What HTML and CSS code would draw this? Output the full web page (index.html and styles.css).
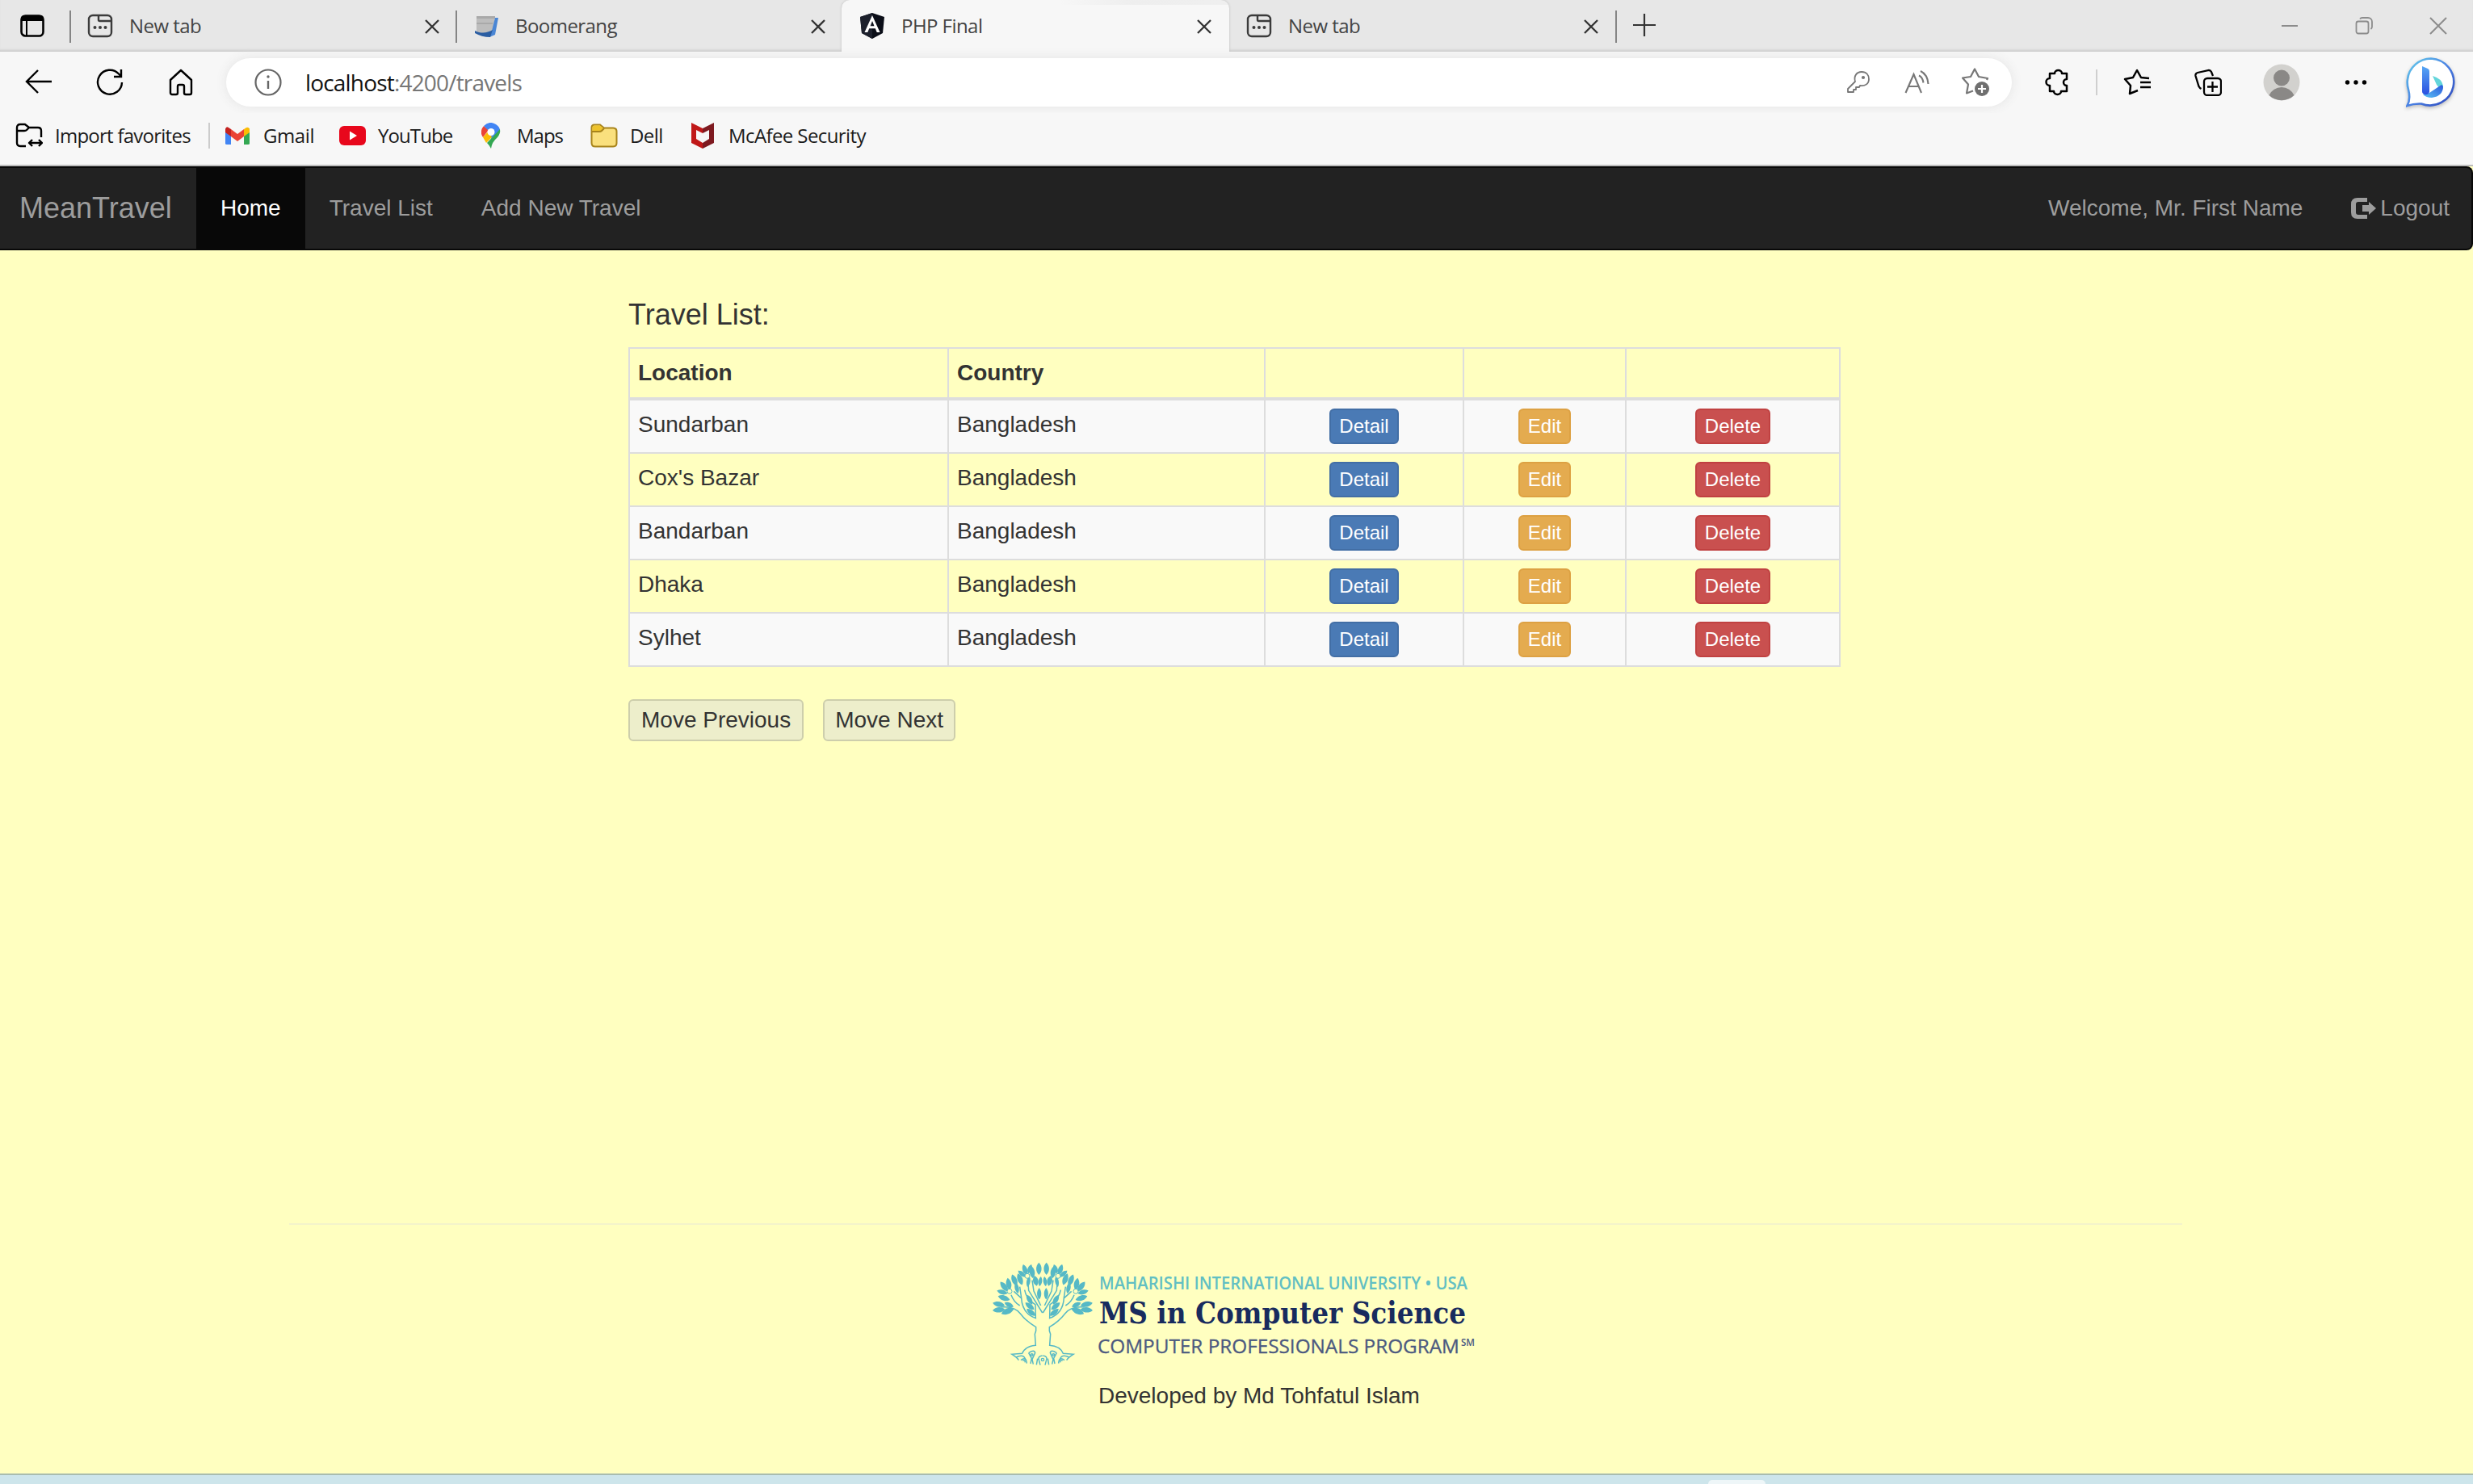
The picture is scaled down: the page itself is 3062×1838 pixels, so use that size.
FILE: index.html
```html
<!DOCTYPE html>
<html lang="en">
<head>
<meta charset="utf-8">
<title>PHP Final</title>
<link rel="stylesheet" href="styles.css">
</head>
<body>
<svg class="defs" width="0" height="0">
  <defs>
    <symbol id="page" viewBox="0 0 32 32"><g fill="none" stroke="#3b3b3b" stroke-width="2.4"><rect x="2" y="3" width="28" height="26" rx="5"/><path d="M14 3v5.500a1.500 1.500 0 0 0 1.500 1.500H30"/></g><g fill="#3b3b3b"><circle cx="9.500" cy="18" r="2"/><circle cx="16" cy="18" r="2"/><circle cx="22.500" cy="18" r="2"/></g></symbol>
    <symbol id="close" viewBox="0 0 20 18"><path d="M2 1l16 16M18 1L2 17" fill="none" stroke="#333" stroke-width="2.3"/></symbol>
    <linearGradient id="bubble" x1="0" y1="0" x2="1" y2="1"><stop offset="0" stop-color="#63cdeb"/><stop offset=".5" stop-color="#4b83e4"/><stop offset="1" stop-color="#2c45bb"/></linearGradient>
    <linearGradient id="stem" x1="0" y1="0" x2="0" y2="1"><stop offset="0" stop-color="#57a7f4"/><stop offset="1" stop-color="#2b50e0"/></linearGradient>
    <linearGradient id="foot" x1="0" y1="1" x2="1" y2="0"><stop offset="0" stop-color="#5bc4f4"/><stop offset="1" stop-color="#2b55dc"/></linearGradient>
  </defs>
</svg>

<header class="tabs">
  <div class="tab-actions"><svg width="32" height="30" viewBox="0 0 32 30"><rect x="2.500" y="2.500" width="27" height="25" rx="5" fill="none" stroke="#000" stroke-width="2.6"/><path d="M2 8V6a4 4 0 0 1 4-4h20a4 4 0 0 1 4 4v3H2z"/><path d="M9 8v19" stroke="#000" stroke-width="2"/></svg></div>
  <div class="tab divided"><svg class="favicon" width="32" height="32"><use href="#page"/></svg><span>New tab</span><svg class="x" width="20" height="18"><use href="#close"/></svg></div>
  <div class="tab divided"><svg class="favicon" width="32" height="32" viewBox="0 0 32 32"><path d="M4 4h23l-3 22H4z" fill="#bdbdbd"/><path d="M4 4h23v3H4zM4 12h20v2H4z" fill="#a9a9a9"/><path d="M27 6h4l-4 21-7 3 3-8z" fill="#4a86d4"/><path d="M2 22c8 4 15 3 22-1l-3 9c-7 0-14-2-19-5z" fill="#2a5da2"/></svg><span>Boomerang</span><svg class="x" width="20" height="18"><use href="#close"/></svg></div>
  <div class="tab active"><svg class="favicon" width="32" height="32" viewBox="0 0 32 32"><path d="M16 0l15 5-2 20-13 7L3 25 1 5z" fill="#0b0e18"/><path d="M16 0v32L3 25 1 5z" fill="#1c202c"/><path d="M16 3l9.500 21h-3.800l-1.900-4.800h-7.600L10.300 24H6.500zM16 10l-2.500 6.200h5z" fill="#fff"/></svg><span>PHP Final</span><svg class="x" width="20" height="18"><use href="#close"/></svg></div>
  <div class="tab last"><svg class="favicon" width="32" height="32"><use href="#page"/></svg><span>New tab</span><svg class="x" width="20" height="18"><use href="#close"/></svg></div>
  <div class="new-tab"><svg width="28" height="28" viewBox="0 0 28 28"><path d="M14 0v28M0 14h28" stroke="#333" stroke-width="2.2"/></svg></div>
  <div class="window">
    <svg width="22" height="22" viewBox="0 0 22 22"><path d="M1 11h20" stroke="#8c8c8c" stroke-width="2"/></svg>
    <svg width="22" height="22" viewBox="0 0 22 22" fill="none" stroke="#8c8c8c" stroke-width="1.800"><rect x="1.500" y="5.500" width="15" height="15" rx="2.500"/><path d="M6 2.500q1-1.500 3-1.500h7a5 5 0 0 1 5 5v6q0 2-1.500 3"/></svg>
    <svg width="22" height="22" viewBox="0 0 22 22"><path d="M1 1l20 20M21 1L1 21" stroke="#8c8c8c" stroke-width="2"/></svg>
  </div>
</header>

<div class="toolbar">
  <div class="tool"><svg width="34" height="32" viewBox="0 0 34 32" fill="none" stroke="#000" stroke-width="2.400"><path d="M33 15H2M16 1L2 15l14 14"/></svg></div>
  <div class="tool"><svg width="34" height="34" viewBox="0 0 34 34" fill="none" stroke="#000" stroke-width="2.400"><path d="M32 17a15 15 0 1 1-4-10.500l3 3M31 1v9h-9"/></svg></div>
  <div class="tool"><svg width="32" height="34" viewBox="0 0 32 34" fill="none" stroke="#000" stroke-width="2.400" stroke-linejoin="round"><path d="M3 14L16 2l13 12v16a2 2 0 0 1-2 2h-5a2 2 0 0 1-2-2v-8a2 2 0 0 0-2-2h-4a2 2 0 0 0-2 2v8a2 2 0 0 1-2 2H5a2 2 0 0 1-2-2z"/></svg></div>
  <div class="address">
    <svg width="34" height="34" viewBox="0 0 34 34"><circle cx="17" cy="17" r="15.500" fill="none" stroke="#666" stroke-width="2.200"/><path d="M17 15v10" stroke="#666" stroke-width="2.400"/><circle cx="17" cy="10" r="1.700" fill="#666"/></svg>
    <span class="url"><b>localhost</b>:4200/travels</span>
    <svg class="key" width="28" height="28" viewBox="0 0 28 28" fill="none" stroke="#777" stroke-width="1.800" stroke-linejoin="round"><path d="M10 13C8 6 12 1 18 1s9 4 9 9c0 6-5 9-11 8l-1 2h-4v3H8v3H1v-4z"/><circle cx="20" cy="8" r="1.200" fill="#777"/></svg>
    <svg class="read" width="32" height="30" viewBox="0 0 32 30" fill="none" stroke="#777" stroke-width="2.100"><path d="M1.500 28L11.500 5l9.500 23M5 20h13M18 6.500c4 2 5 5 5.500 9M20 1c6 3 9 8 9.500 16"/></svg>
    <svg class="star" width="36" height="36" viewBox="0 0 36 36" fill="none" stroke="#777" stroke-width="2.200" stroke-linejoin="round"><path d="M32 15l1-2-11-2-5-9.500L12 11 2 12.500l7 8-2 11 8-3"/><circle cx="26" cy="26" r="9" fill="#6f6f6f" stroke="none"/><path d="M26 21v10M21 26h10" stroke="#fff"/></svg>
  </div>
  <div class="tool ext"><svg width="34" height="34" viewBox="0 0 34 34" fill="none" stroke="#000" stroke-width="2.500" stroke-linejoin="round"><path d="M8 6h5a4.500 4 0 0 1 9 0h6v7a4 4 0 1 0 0 8v7h-7a4.500 4 0 0 1-9 0H7v-7a4.500 4.500 0 0 1 0-9V6z"/></svg></div>
  <div class="rule"></div>
  <div class="tool favorites"><svg width="34" height="34" viewBox="0 0 34 34" fill="none" stroke="#000" stroke-width="2.500" stroke-linejoin="round"><path d="M32 12l-10-1-5-9-5 9-10 2 7 8-1 10 10-4M21 17h13M21 23h13"/></svg></div>
  <div class="tool collections"><svg width="34" height="34" viewBox="0 0 34 34" fill="none" stroke="#000" stroke-width="2.300"><rect x="12" y="12" width="21" height="21" rx="4"/><path d="M22.500 16v13M16 22.500h13M23 9l-2-5q-1-2-3-2L4 5Q1 6 1.500 9l4 13q1 2 3 3"/></svg></div>
  <div class="tool profile"><svg width="46" height="46" viewBox="0 0 46 46"><circle cx="23" cy="23" r="22.500" fill="#d2d1ce"/><circle cx="23" cy="17.500" r="10" fill="#8a8886"/><path d="M7.500 39a17 17 0 0 1 31 0 22.500 22.500 0 0 1-31 0z" fill="#8a8886"/></svg></div>
  <div class="tool more"><svg width="28" height="6" viewBox="0 0 28 6"><circle cx="3.500" cy="3" r="2.700"/><circle cx="14" cy="3" r="2.700"/><circle cx="24.500" cy="3" r="2.700"/></svg></div>
  <div class="tool chat"><svg class="bing" width="62" height="62" viewBox="0 0 62 62"><path d="M31 1.500a29.500 29 0 1 1-12 56Q10 57 1.500 60 6 52 3 40 1 33 2 27A29.500 29 0 0 1 31 1.500z" fill="#fff" stroke="url(#bubble)" stroke-width="2.600"/><path d="M33 23q11 3 13 12 0 4-2 7l-6-8z" fill="#62d5da"/><path d="M21 46q4 4 11 4 14-2 14-14l-2-2L29 44z" fill="url(#foot)"/><path d="M20 11l7 3q2 1 2 3v26q-2 4-6 3-3-1-3-4z" fill="url(#stem)"/></svg></div>
</div>

<nav class="bookmarks">
  <a class="bm import"><svg width="34" height="32" viewBox="0 0 34 32" fill="none" stroke="#000" stroke-width="2.400" stroke-linejoin="round"><path d="M13 29H6q-4 0-4-4V6q0-4 4-4h6l5 4h11q4 0 4 4v8M2 10h9q2 0 3-1l3-3M21 21l-4 4 4 4M29 21l4 4-4 4M17 25h16"/></svg><span>Import favorites</span></a>
  <a class="bm gmail"><svg width="30" height="24" viewBox="0 0 30 24"><path d="M0 3v19q0 1 2 1h5V9z" fill="#4285f4"/><path d="M23 9v14h5q2 0 2-1V3z" fill="#34a853"/><path d="M23 4l3-2q3-1 4 2v4l-7 5z" fill="#fbbc04"/><path d="M7 4v9l8 6 8-6V4l-8 6z" fill="#ea4335"/><path d="M0 4q1-4 4-2l3 2v9L0 8z" fill="#c5221f"/></svg><span>Gmail</span></a>
  <a class="bm youtube"><svg width="33" height="24" viewBox="0 0 33 24"><rect width="33" height="24" rx="6" fill="#e8071c"/><path d="M13 6.500l9 5.500-9 5.500z" fill="#fff"/></svg><span>YouTube</span></a>
  <a class="bm maps"><svg width="24" height="32" viewBox="0 0 24 32"><path d="M3 4l6 5-7 9Q-3 11 3 4z" fill="#ea4335"/><path d="M3 4Q10-3 18 2q5 3 5 8L12 20l-2-9z" fill="#4285f4"/><path d="M2 18l7-8 4 8-7 7z" fill="#fbbc04"/><path d="M12 32Q13 24 20 18q4-5 3-10L7 25q3 3 5 7z" fill="#34a853"/><circle cx="12" cy="11.500" r="4.500" fill="#fff"/></svg><span>Maps</span></a>
  <a class="bm dell"><svg width="34" height="30" viewBox="0 0 34 30"><path d="M5 1.500h7l5 4h11q4.500 0 4.500 4.500v14q0 4.500-4.500 4.500H6q-4.500 0-4.500-4.500V5q0-3.500 3.500-3.500z" fill="#fae07d" stroke="#a8841b" stroke-width="2"/><path d="M2.500 9V5q0-2.500 2.500-2.500h7L16 6l-3 3.500z" fill="#eec32c"/><path d="M2 10h9q2 0 3-1l3-3" fill="none" stroke="#a8841b" stroke-width="2"/></svg><span>Dell</span></a>
  <a class="bm mcafee"><svg width="30" height="32" viewBox="0 0 30 32"><path d="M1 0l14 7v6L7 9v11l8 5v7L1 25z" fill="#c01818"/><path d="M29 0L15 7v6l8-4v11l-8 5v7l14-7z" fill="#7e1a20"/></svg><span>McAfee Security</span></a>
</nav>

<nav class="navbar">
  <a class="brand">MeanTravel</a>
  <a class="link current">Home</a>
  <a class="link">Travel List</a>
  <a class="link">Add New Travel</a>
  <a class="link welcome">Welcome, Mr. First Name</a>
  <a class="link logout"><svg width="32" height="26" viewBox="0 0 32 26" fill="#9d9d9d"><path d="M20 0v5H9Q6 5 6 8v10q0 3 3 3h11v5H8q-8 0-8-8V8q0-8 8-8z"/><path d="M14 9h8V5l9 8-9 8v-4h-8z"/></svg>Logout</a>
</nav>

<main class="content">
  <h4>Travel List:</h4>
  <table>
    <colgroup><col class="c-loc"><col class="c-country"><col class="c-detail"><col class="c-edit"><col class="c-delete"></colgroup>
    <thead><tr><th>Location</th><th>Country</th><th></th><th></th><th></th></tr></thead>
    <tbody>
      <tr><td>Sundarban</td><td>Bangladesh</td><td><button class="btn detail">Detail</button></td><td><button class="btn edit">Edit</button></td><td><button class="btn delete">Delete</button></td></tr>
      <tr><td>Cox's Bazar</td><td>Bangladesh</td><td><button class="btn detail">Detail</button></td><td><button class="btn edit">Edit</button></td><td><button class="btn delete">Delete</button></td></tr>
      <tr><td>Bandarban</td><td>Bangladesh</td><td><button class="btn detail">Detail</button></td><td><button class="btn edit">Edit</button></td><td><button class="btn delete">Delete</button></td></tr>
      <tr><td>Dhaka</td><td>Bangladesh</td><td><button class="btn detail">Detail</button></td><td><button class="btn edit">Edit</button></td><td><button class="btn delete">Delete</button></td></tr>
      <tr><td>Sylhet</td><td>Bangladesh</td><td><button class="btn detail">Detail</button></td><td><button class="btn edit">Edit</button></td><td><button class="btn delete">Delete</button></td></tr>
    </tbody>
  </table>
  <div class="pager"><button>Move Previous</button><button class="next">Move Next</button></div>
</main>

<footer class="footer">
  <div class="logo">
    <svg width="630" height="145" viewBox="0 0 630 145">
      <defs>
        <path id="leaf" d="M0-23C13-10 13 10 0 23C-13 10-13-10 0-23Z"/>
        <g id="half">
          <g fill="#56b9c6">
            <use href="#leaf" transform="translate(199 49)"/>
            <use href="#leaf" transform="translate(174 62) rotate(-8)"/>
            <use href="#leaf" transform="translate(187 94) rotate(-12) scale(1 .85)"/>
            <use href="#leaf" transform="translate(204 96) rotate(8) scale(.7 .8)"/>
            <use href="#leaf" transform="translate(200 142) scale(.8 .95)"/>
            <use href="#leaf" transform="translate(147 53) rotate(-18) scale(.9)"/>
            <use href="#leaf" transform="translate(165 50) rotate(20) scale(.8)"/>
            <use href="#leaf" transform="translate(136 68) rotate(-50) scale(.8)"/>
            <use href="#leaf" transform="translate(129 88) rotate(-20)"/>
            <use href="#leaf" transform="translate(160 97) rotate(10) scale(.7 .9)"/>
            <use href="#leaf" transform="translate(108 92) rotate(-22)"/>
            <use href="#leaf" transform="translate(117 121) rotate(-12) scale(.8 .9)"/>
            <use href="#leaf" transform="translate(87 106) rotate(-10)"/>
            <use href="#leaf" transform="translate(70 116) rotate(-38)"/>
            <use href="#leaf" transform="translate(63 136) rotate(-75) scale(.9)"/>
            <use href="#leaf" transform="translate(69 158) rotate(-72)"/>
            <use href="#leaf" transform="translate(50 181) rotate(-78)"/>
            <use href="#leaf" transform="translate(50 202) rotate(-95)"/>
            <use href="#leaf" transform="translate(83 207) rotate(-112) scale(1.100)"/>
            <use href="#leaf" transform="translate(88 183) rotate(-65) scale(.8)"/>
            <use href="#leaf" transform="translate(164 164) rotate(-30) scale(.9)"/>
            <use href="#leaf" transform="translate(165 188) rotate(-52) scale(.9)"/>
            <use href="#leaf" transform="translate(170 211) rotate(-52) scale(.9)"/>
          </g>
          <g fill="none" stroke="#56b9c6" stroke-width="4.500">
            <circle cx="156" cy="76" r="9" fill="#ffffc0" stroke-width="3"/>
            <circle cx="90" cy="133" r="9" fill="#ffffc0" stroke-width="3"/>
            <path d="M96 146Q105 172 128 186M106 133L133 158M128 116L134 158Q137 215 187 233L186 183Q151 160 146 128M158 88L161 130 212 213M174 92L180 132 206 186"/>
            <path d="M58 192Q108 187 130 216T188 266V280L184 292 187 334Q148 337 137 364L99 367Q119 379 124 389M114 378Q145 364 149 389M161 362Q183 348 185 362L174 386 178 404M161 362L172 382 168 402M199 388Q194 374 212 372M199 388L204 407M194 383L190 406"/>
            <circle cx="173" cy="369" r="4"/>
            <path d="M132 389Q152 373 154 401M139 391Q147 386 148 397"/>
          </g>
        </g>
      </defs>
      <g transform="scale(.3333)"><use href="#half"/><use href="#half" transform="translate(426 0) scale(-1 1)"/><circle cx="213" cy="387" r="5" fill="none" stroke="#56b9c6" stroke-width="4"/></g>
      <text class="university" x="141" y="42" textLength="456" lengthAdjust="spacingAndGlyphs">MAHARISHI INTERNATIONAL UNIVERSITY • USA</text>
      <text class="degree" x="141" y="84" textLength="454" lengthAdjust="spacingAndGlyphs">MS in Computer Science</text>
      <text class="program" x="139" y="121" textLength="448" lengthAdjust="spacingAndGlyphs">COMPUTER PROFESSIONALS PROGRAM</text>
      <text class="mark" x="589" y="112" textLength="17" lengthAdjust="spacingAndGlyphs">SM</text>
    </svg>
  </div>
  <p>Developed by Md Tohfatul Islam</p>
</footer>
<div class="taskbar"><div class="peek"></div></div>
</body>
</html>
```
FILE: styles.css
```css
* { box-sizing: border-box; }
body {
  margin: 0;
  width: 3062px;
  height: 1838px;
  overflow: hidden;
  display: flex;
  flex-direction: column;
  background: #ffffc0;
  color: #333;
  font: 28px/40px "Liberation Sans", Arial, sans-serif;
}
svg { display: block; flex: none; }
.defs { position: absolute; }
.tabs, .toolbar, .bookmarks { font-family: "Open Sans", "Noto Sans", sans-serif; flex: none; }

.tabs {
  display: flex;
  height: 64px;
  background: #e7e7e7;
  box-shadow: inset 0 -4px 3px -2px #c9c9c9;
  font-size: 24px;
  letter-spacing: -.55px;
  color: #444;
}
.tab-actions { width: 86px; padding: 17px 0 0 24px; }
.tab {
  display: flex;
  align-items: center;
  width: 478px;
  padding: 0 19px 0 22px;
  line-height: 62px;
}
.divided { background: linear-gradient(#858585, #858585) 0 13px / 2px 40px no-repeat; }
.tab .favicon { margin-right: 20px; }
.tab .x { margin-left: auto; margin-top: 2px; }
.tab.active {
  width: 480px;
  padding-right: 21px;
  background: linear-gradient(90deg, transparent 56%, rgba(236,236,236,.8) 75%, #efefef) 0 0 / 480px 6px no-repeat, #f7f7f7;
  border-radius: 10px 10px 0 0;
  box-shadow: 0 0 3px #bbb;
}
.tab.last { padding-left: 21px; padding-right: 20px; }
.new-tab {
  width: 60px;
  padding: 17px 0 0 22px;
  background: linear-gradient(#858585, #858585) 0 13px / 2px 40px no-repeat;
}
.window { display: flex; align-items: center; gap: 70px; margin-left: auto; padding-right: 32px; }

.toolbar {
  display: flex;
  align-items: center;
  height: 76px;
  padding-left: 4px;
  background: #f7f7f7;
}
.tool { flex: none; width: 88px; display: flex; justify-content: center; }
.address {
  display: flex;
  flex: none;
  align-items: center;
  width: 2211px;
  height: 60px;
  margin-left: 12px;
  padding: 0 27px 0 35px;
  border-radius: 30px;
  background: #fff;
  box-shadow: 0 0 14px #e3e3e3;
}
.url { margin-left: 29px; font-size: 28px; letter-spacing: -.82px; color: #767676; }
.url b { font-weight: 400; color: #111; }
.key { margin-left: auto; }
.read { margin-left: 43px; }
.star { margin-left: 38px; }
.ext { margin-left: 13px; }
.rule { width: 2px; height: 32px; margin-left: 3px; background: #cfcfcf; }
.favorites { margin-left: 5px; }
.profile { margin-left: 3px; }
.more { margin-left: 4px; }
.chat { margin-left: 5px; }
.bing { filter: drop-shadow(0 2px 2px #bbb); }

.bookmarks {
  display: flex;
  align-items: center;
  height: 66px;
  padding: 0 0 8px 19px;
  background: #f7f7f7;
  border-bottom: 2px solid #bdbdbd;
  color: #1b1b1b;
  font-size: 24px;
  letter-spacing: -.6px;
}
.bm { display: flex; align-items: center; }
.import { width: 239px; gap: 15px; letter-spacing: -.75px; }
.gmail { width: 161px; height: 32px; padding-left: 19px; gap: 17px; border-left: 2px solid #ccc; letter-spacing: -.4px; }
.youtube { width: 176px; padding-left: 1px; gap: 15px; letter-spacing: -.9px; }
.maps { width: 136px; gap: 20px; padding-left: 1px; letter-spacing: -1px; }
.dell { width: 124px; gap: 15px; }
.mcafee { gap: 17px; }

.navbar {
  display: flex;
  flex: none;
  height: 104px;
  background: #222;
  border: solid #080808;
  border-width: 2px 2px 2px 0;
  border-radius: 0 8px 8px 0;
  color: #9d9d9d;
  line-height: 100px;
}
.brand { width: 243px; padding-left: 24px; font-size: 36px; }
.link { padding: 0 30px; }
.current { background: #080808; color: #fff; }
.welcome { margin-left: auto; }
.logout { display: flex; align-items: center; gap: 4px; padding-right: 27px; }

.content { flex: none; width: 1500px; height: 1205px; margin-left: 778px; padding-top: 60px; }
h4 { margin: 0 0 20px; font-size: 36px; line-height: 40px; font-weight: 400; }
table { width: 1500px; table-layout: fixed; border-collapse: collapse; }
.c-loc { width: 395px; }
.c-country { width: 392px; }
.c-detail { width: 246px; }
.c-edit { width: 201px; }
.c-delete { width: 265px; }
th, td { height: 66px; padding: 10px; border: 2px solid #ddd; text-align: left; vertical-align: top; }
th { height: 63px; border-bottom-width: 4px; }
tbody tr:nth-child(odd) { background: #f9f9f9; }
.btn {
  display: block;
  height: 44px;
  margin: 0 auto;
  padding: 0 10px;
  border: 2px solid;
  border-radius: 6px;
  color: #fff;
  font: 24px/36px "Liberation Sans", Arial, sans-serif;
}
.detail { background: #4a7ab5; border-color: #426ea5; }
.edit { background: #e4ab4f; border-color: #dda143; }
.delete { background: #c9504f; border-color: #c04141; }
.pager { display: flex; gap: 24px; margin-top: 40px; }
.pager button {
  height: 52px;
  padding: 0 14px;
  border: 2px solid #cdceac;
  border-radius: 6px;
  background: #edeecb;
  color: #333;
  font: 28px/44px "Liberation Sans", Arial, sans-serif;
}
.pager .next { padding: 0 13px; }

.footer { flex: none; height: 310px; width: 2344px; margin-left: 358px; border-top: 2px solid #f3f3cb; }
.logo { padding: 38px 0 0 862px; }
.footer p { margin: 9px 0 0 1002px; }
.university { font: 600 21px "Open Sans", sans-serif; fill: #62bfc3; }
.degree { font: 700 38px "DejaVu Serif Condensed", "DejaVu Serif", serif; fill: #182b5e; }
.program { font: 400 24.500px "Open Sans", sans-serif; fill: #4c5a80; stroke: #4c5a80; stroke-width: .3px; }
.mark { font: 600 12px "Open Sans", sans-serif; fill: #4c5a80; }

.taskbar { flex: none; height: 13px; padding: 6px 0 0 2115px; background: #cde5eb; border-top: 2px solid #a9bcae; }
.peek { width: 71px; height: 5px; border-radius: 6px 6px 0 0; background: #eef6f8; }
```
